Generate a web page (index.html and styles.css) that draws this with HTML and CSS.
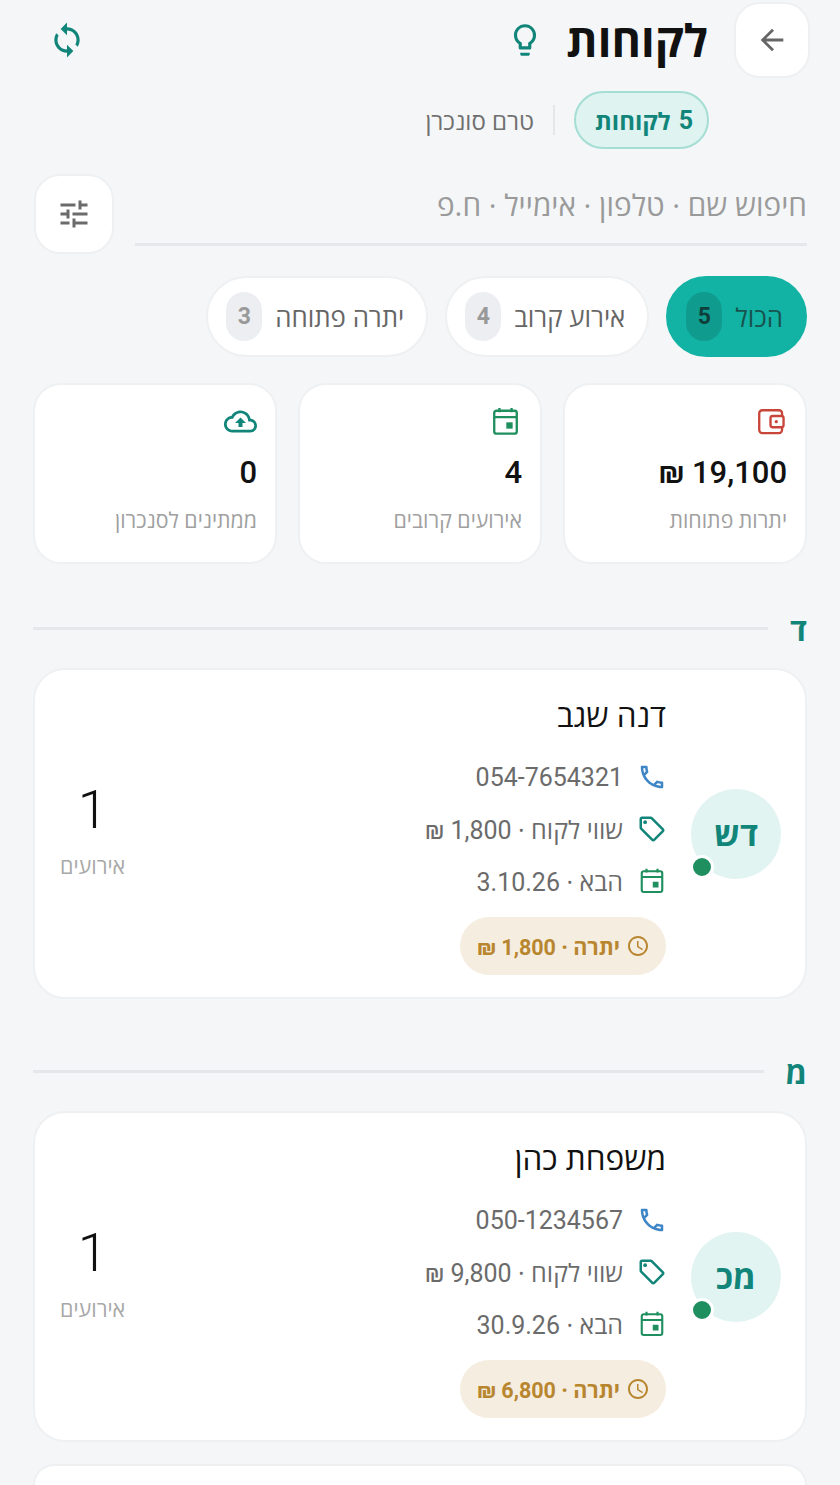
FILE: index.html
```html
<!DOCTYPE html>
<html lang="he" dir="rtl">

<head>
  <meta charset="UTF-8">
  <meta name="viewport" content="width=device-width, initial-scale=1.0">
  <title>לקוחות</title>
  <link rel="stylesheet" href="styles.css">
</head>

<body>
  <div class="page">
    <header class="topbar">
      <button class="icon-button back-button">
        <svg class="icon-back" viewBox="0 0 24 24"><path d="M20 11H7.83l5.59-5.59L12 4l-8 8 8 8 1.41-1.41L7.83 13H20v-2z"/></svg>
      </button>
      <h1 class="title">לקוחות</h1>
      <svg class="icon-bulb" viewBox="0 0 24 24"><path d="M9 21c0 .55.45 1 1 1h4c.55 0 1-.45 1-1v-1H9v1zm3-19C8.14 2 5 5.14 5 9c0 2.38 1.19 4.47 3 5.74V17c0 .55.45 1 1 1h6c.55 0 1-.45 1-1v-2.26c1.81-1.27 3-3.36 3-5.74 0-3.86-3.14-7-7-7zm2.85 11.1l-.85.6V16h-4v-2.3l-.85-.6C7.8 12.16 7 10.63 7 9c0-2.76 2.24-5 5-5s5 2.24 5 5c0 1.63-.8 3.16-2.15 4.1z"/></svg>
      <svg class="icon-sync" viewBox="0 0 24 24"><path d="M12 4V1L8 5l4 4V6c3.31 0 6 2.69 6 6 0 1.01-.25 1.97-.7 2.8l1.46 1.46C19.54 15.03 20 13.57 20 12c0-4.42-3.58-8-8-8zm0 14c-3.31 0-6-2.69-6-6 0-1.01.25-1.97.7-2.8L5.24 7.74C4.46 8.97 4 10.43 4 12c0 4.42 3.58 8 8 8v3l4-4-4-4v3z"/></svg>
    </header>

    <div class="summary">
      <span class="count-chip"><span class="chip-num num">5</span> לקוחות</span>
      <span class="summary-divider"></span>
      <span class="summary-note">טרם סונכרן</span>
    </div>

    <div class="search-row">
      <div class="search-field">חיפוש שם · טלפון · אימייל · ח.פ</div>
      <button class="icon-button filter-button">
        <svg class="icon-tune" viewBox="0 0 24 24"><path d="M3 17v2h6v-2H3zM3 5v2h10V5H3zm10 16v-2h8v-2h-8v-2h-2v6h2zM7 9v2H3v2h4v2h2V9H7zm14 4v-2H11v2h10zm-6-4h2V7h4V5h-4V3h-2v6z"/></svg>
      </button>
    </div>

    <div class="tabs">
      <div class="tab is-active"><span>הכול</span><span class="tab-count num">5</span></div>
      <div class="tab"><span>אירוע קרוב</span><span class="tab-count num">4</span></div>
      <div class="tab"><span>יתרה פתוחה</span><span class="tab-count num">3</span></div>
    </div>

    <div class="stats">
      <div class="stat">
        <svg class="stat-icon icon-red" viewBox="0 0 24 24"><rect x="3.8" y="3.8" width="16.6" height="16.6" rx="2.2" fill="none" stroke="currentColor" stroke-width="1.7"/><rect x="12" y="8" width="9.5" height="8.2" rx="1.6" fill="#fff" stroke="currentColor" stroke-width="1.7"/><circle cx="16.2" cy="12.1" r="1.2"/></svg>
        <div class="stat-value num">19,100 ₪</div>
        <div class="stat-label">יתרות פתוחות</div>
      </div>
      <div class="stat">
        <svg class="stat-icon icon-green" viewBox="0 0 24 24"><rect x="3.8" y="4.2" width="16.4" height="16.6" rx="1.6" fill="none" stroke="currentColor" stroke-width="1.7"/><path d="M3.8 8.8h16.4M7.6 2.2v3M16.4 2.2v3" fill="none" stroke="currentColor" stroke-width="1.7"/><rect x="12.6" y="12.6" width="4.6" height="4.6"/></svg>
        <div class="stat-value num">4</div>
        <div class="stat-label">אירועים קרובים</div>
      </div>
      <div class="stat">
        <svg class="stat-icon icon-teal" viewBox="0 0 24 24"><path d="M19.35 10.04C18.67 6.59 15.64 4 12 4 9.11 4 6.6 5.64 5.35 8.04 2.34 8.36 0 10.91 0 14c0 3.31 2.69 6 6 6h13c2.76 0 5-2.24 5-5 0-2.64-2.05-4.78-4.65-4.96zM19 18H6c-2.21 0-4-1.79-4-4 0-2.05 1.53-3.76 3.56-3.97l1.07-.11.5-.95C8.08 7.14 9.94 6 12 6c2.62 0 4.88 1.86 5.39 4.43l.3 1.5 1.53.11c1.56.1 2.78 1.41 2.78 2.96 0 1.65-1.35 3-3 3zM8 13h2.55v3h2.9v-3H16l-4-4z"/></svg>
        <div class="stat-value num">0</div>
        <div class="stat-label">ממתינים לסנכרון</div>
      </div>
    </div>

    <section class="group">
      <div class="group-head"><span class="group-letter">ד</span><span class="group-line"></span></div>
      <article class="card">
        <div class="avatar">דש<span class="avatar-dot"></span></div>
        <div class="card-body">
          <div class="card-name">דנה שגב</div>
          <div class="card-row">
            <svg class="row-icon icon-blue" viewBox="0 0 24 24"><path d="M6.54 5c.06.89.21 1.76.45 2.59l-1.2 1.2c-.41-1.2-.67-2.47-.76-3.79h1.51m9.86 12.02c.85.24 1.72.39 2.6.45v1.49c-1.32-.09-2.59-.35-3.8-.75l1.2-1.19M7.5 3H4c-.55 0-1 .45-1 1 0 9.39 7.61 17 17 17 .55 0 1-.45 1-1v-3.49c0-.55-.45-1-1-1-1.24 0-2.45-.2-3.57-.57-.1-.04-.21-.05-.31-.05-.26 0-.51.1-.71.29l-2.2 2.2c-2.83-1.45-5.15-3.76-6.59-6.59l2.2-2.2c.28-.28.36-.67.25-1.02C8.7 6.45 8.5 5.25 8.5 4c0-.55-.45-1-1-1z"/></svg>
            <span class="num">054-7654321</span>
          </div>
          <div class="card-row">
            <svg class="row-icon icon-teal" viewBox="0 0 24 24"><path d="M21.41 11.58l-9-9C12.05 2.22 11.55 2 11 2H4c-1.1 0-2 .9-2 2v7c0 .55.22 1.05.59 1.42l9 9c.36.36.86.58 1.41.58.55 0 1.05-.22 1.41-.59l7-7c.37-.36.59-.86.59-1.41 0-.55-.23-1.06-.59-1.42zM13 20.01L4 11V4h7v-.01l9 9-7 7.02z"/><circle cx="6.5" cy="6.5" r="1.5"/></svg>
            <span>שווי לקוח · <span class="num">1,800 ₪</span></span>
          </div>
          <div class="card-row">
            <svg class="row-icon icon-green" viewBox="0 0 24 24"><rect x="3.8" y="4.2" width="16.4" height="16.6" rx="1.6" fill="none" stroke="currentColor" stroke-width="1.7"/><path d="M3.8 8.8h16.4M7.6 2.2v3M16.4 2.2v3" fill="none" stroke="currentColor" stroke-width="1.7"/><rect x="12.6" y="12.6" width="4.6" height="4.6"/></svg>
            <span>הבא · <span class="num">3.10.26</span></span>
          </div>
          <div class="balance">
            <svg class="balance-icon" viewBox="0 0 24 24"><path d="M11.99 2C6.47 2 2 6.48 2 12s4.47 10 9.99 10C17.52 22 22 17.52 22 12S17.52 2 11.99 2zM12 20c-4.42 0-8-3.58-8-8s3.58-8 8-8 8 3.58 8 8-3.58 8-8 8zm.5-13H11v6l5.25 3.15.75-1.23-4.5-2.67z"/></svg>
            <span>יתרה · <span class="num">1,800 ₪</span></span>
          </div>
        </div>
        <div class="card-side">
          <div class="side-count num">1</div>
          <div class="side-label">אירועים</div>
        </div>
      </article>
    </section>

    <section class="group">
      <div class="group-head"><span class="group-letter">מ</span><span class="group-line"></span></div>
      <article class="card">
        <div class="avatar">מכ<span class="avatar-dot"></span></div>
        <div class="card-body">
          <div class="card-name">משפחת כהן</div>
          <div class="card-row">
            <svg class="row-icon icon-blue" viewBox="0 0 24 24"><path d="M6.54 5c.06.89.21 1.76.45 2.59l-1.2 1.2c-.41-1.2-.67-2.47-.76-3.79h1.51m9.86 12.02c.85.24 1.72.39 2.6.45v1.49c-1.32-.09-2.59-.35-3.8-.75l1.2-1.19M7.5 3H4c-.55 0-1 .45-1 1 0 9.39 7.61 17 17 17 .55 0 1-.45 1-1v-3.49c0-.55-.45-1-1-1-1.24 0-2.45-.2-3.57-.57-.1-.04-.21-.05-.31-.05-.26 0-.51.1-.71.29l-2.2 2.2c-2.83-1.45-5.15-3.76-6.59-6.59l2.2-2.2c.28-.28.36-.67.25-1.02C8.7 6.45 8.5 5.25 8.5 4c0-.55-.45-1-1-1z"/></svg>
            <span class="num">050-1234567</span>
          </div>
          <div class="card-row">
            <svg class="row-icon icon-teal" viewBox="0 0 24 24"><path d="M21.41 11.58l-9-9C12.05 2.22 11.55 2 11 2H4c-1.1 0-2 .9-2 2v7c0 .55.22 1.05.59 1.42l9 9c.36.36.86.58 1.41.58.55 0 1.05-.22 1.41-.59l7-7c.37-.36.59-.86.59-1.41 0-.55-.23-1.06-.59-1.42zM13 20.01L4 11V4h7v-.01l9 9-7 7.02z"/><circle cx="6.5" cy="6.5" r="1.5"/></svg>
            <span>שווי לקוח · <span class="num">9,800 ₪</span></span>
          </div>
          <div class="card-row">
            <svg class="row-icon icon-green" viewBox="0 0 24 24"><rect x="3.8" y="4.2" width="16.4" height="16.6" rx="1.6" fill="none" stroke="currentColor" stroke-width="1.7"/><path d="M3.8 8.8h16.4M7.6 2.2v3M16.4 2.2v3" fill="none" stroke="currentColor" stroke-width="1.7"/><rect x="12.6" y="12.6" width="4.6" height="4.6"/></svg>
            <span>הבא · <span class="num">30.9.26</span></span>
          </div>
          <div class="balance">
            <svg class="balance-icon" viewBox="0 0 24 24"><path d="M11.99 2C6.47 2 2 6.48 2 12s4.47 10 9.99 10C17.52 22 22 17.52 22 12S17.52 2 11.99 2zM12 20c-4.42 0-8-3.58-8-8s3.58-8 8-8 8 3.58 8 8-3.58 8-8 8zm.5-13H11v6l5.25 3.15.75-1.23-4.5-2.67z"/></svg>
            <span>יתרה · <span class="num">6,800 ₪</span></span>
          </div>
        </div>
        <div class="card-side">
          <div class="side-count num">1</div>
          <div class="side-label">אירועים</div>
        </div>
      </article>
    </section>

    <div class="card-next"></div>
  </div>
</body>

</html>
```

FILE: styles.css
```css
* {
  margin: 0;
  padding: 0;
  box-sizing: border-box;
}

html,
body {
  height: 100%;
  overflow: hidden;
}

body {
  background: #F4F6F8;
  color: #111;
  font-family: "Open Sans", Roboto, sans-serif;
}

.num {
  font-family: Roboto, sans-serif;
}

.page {
  display: flex;
  flex-direction: column;
  padding: 2px 33px 0;
}

svg {
  display: block;
  flex-shrink: 0;
  fill: currentColor;
}

.icon-red { color: #C8453A; }
.icon-green { color: #1F8F5F; }
.icon-teal { color: #12857A; }
.icon-blue { color: #3E86C6; }

.icon-button {
  display: flex;
  align-items: center;
  justify-content: center;
  background: #fff;
  border: 2px solid #EEF0F2;
  border-radius: 26px;
}

/* top bar */
.topbar {
  display: flex;
  align-items: center;
  height: 76px;
  margin-right: -3px;
}

.back-button {
  width: 76px;
  height: 76px;
  color: #666;
}

.icon-back {
  width: 34px;
  height: 34px;
}

.title {
  margin-right: 26px;
  font-size: 45px;
  font-weight: 700;
  line-height: 76px;
}

.icon-bulb {
  width: 38px;
  height: 38px;
  margin-right: 22px;
  color: #12857A;
}

.icon-sync {
  width: 38px;
  height: 38px;
  margin-right: auto;
  margin-left: 15px;
  color: #12857A;
}

/* count line */
.summary {
  display: flex;
  align-items: center;
  margin-top: 13px;
  margin-right: 98px;
}

.count-chip {
  display: flex;
  align-items: center;
  gap: 8px;
  height: 58px;
  padding: 0 14px 0 19px;
  border: 2px solid #A5DED5;
  border-radius: 29px;
  background: #DFF3F0;
  color: #12857A;
  font-size: 24px;
  font-weight: 700;
}

.chip-num {
  font-size: 25px;
}

.summary-divider {
  width: 2px;
  height: 30px;
  margin: 0 19px;
  background: #E4E6E8;
}

.summary-note {
  color: #6F6F6F;
  font-size: 24px;
}

/* search */
.search-row {
  display: flex;
  align-items: flex-start;
  gap: 21px;
  margin-top: 25px;
  padding-left: 1px;
}

.search-field {
  flex: 1;
  height: 72px;
  border-bottom: 3px solid #E5E7EA;
  color: #9A9A9A;
  font-size: 29.7px;
  line-height: 62px;
}

.filter-button {
  width: 80px;
  height: 80px;
  color: #6B6B6B;
}

.icon-tune {
  width: 36px;
  height: 36px;
}

/* tabs */
.tabs {
  display: flex;
  gap: 17px;
  margin-top: 22px;
}

.tab {
  display: flex;
  align-items: center;
  gap: 13px;
  height: 81px;
  padding: 0 22px 0 18px;
  border: 2px solid #EEF0F2;
  border-radius: 41px;
  background: #fff;
  color: #666;
  font-size: 25.8px;
}

.tab-count {
  display: flex;
  align-items: center;
  justify-content: center;
  width: 36px;
  height: 49px;
  border-radius: 18px;
  background: #ECEEF1;
  color: #999;
  font-size: 23px;
  font-weight: 700;
}

.tab.is-active {
  border-color: #12B3A4;
  background: #12B3A4;
  color: #17544F;
}

.tab.is-active .tab-count {
  background: #0F9C8F;
  color: #0F3F3B;
}

/* stat tiles */
.stats {
  display: grid;
  grid-template-columns: repeat(3, 1fr);
  gap: 21px;
  margin-top: 26px;
}

.stat {
  display: flex;
  flex-direction: column;
  height: 181px;
  padding: 20px 18px 0;
  border: 2px solid #EEF0F2;
  border-radius: 28px;
  background: #fff;
}

.stat-icon {
  width: 33px;
  height: 33px;
}

.stat-value {
  margin-top: 13px;
  font-size: 31px;
  font-weight: 500;
  line-height: 44px;
}

.stat-label {
  margin-top: 10px;
  color: #A0A0A0;
  font-size: 21.3px;
  line-height: 30px;
}

/* groups */
.group {
  margin-top: 51px;
}

.group + .group {
  margin-top: 59px;
}

.group-head {
  display: flex;
  align-items: center;
  gap: 22px;
  height: 30px;
}

.group-letter {
  padding-bottom: 2px;
  color: #12857A;
  font-size: 31px;
  font-weight: 700;
  line-height: 30px;
}

.group-line {
  flex: 1;
  height: 3px;
  margin-bottom: 4px;
  background: #E5E7EA;
}

.card {
  display: flex;
  align-items: center;
  height: 331px;
  margin-top: 23px;
  padding: 0 24px 0 25px;
  border: 2px solid #EEF0F2;
  border-radius: 32px;
  background: #fff;
}

.card-next {
  height: 21px;
  margin-top: 22px;
  border: 2px solid #EEF0F2;
  border-bottom: 0;
  border-radius: 32px 32px 0 0;
  background: #fff;
}

.avatar {
  position: relative;
  display: flex;
  align-items: center;
  justify-content: center;
  width: 90px;
  height: 90px;
  border-radius: 50%;
  background: #E1F4F1;
  color: #12857A;
  font-size: 33px;
  font-weight: 700;
}

.avatar-dot {
  position: absolute;
  right: 67px;
  bottom: 0;
  width: 24px;
  height: 24px;
  border: 3px solid #fff;
  border-radius: 50%;
  background: #1F8F5F;
}

.card-body {
  display: flex;
  flex-direction: column;
  align-items: flex-start;
  margin-right: 25px;
}

.card-name {
  margin-bottom: 13px;
  font-size: 31.5px;
  line-height: 46px;
}

.card-row {
  display: flex;
  align-items: center;
  height: 52px;
  color: #6B6B6B;
  font-size: 25px;
}

.row-icon {
  width: 30px;
  height: 30px;
  margin: 0 -1px 0 14px;
}

.balance {
  display: flex;
  align-items: center;
  gap: 6px;
  height: 58px;
  margin-top: 10px;
  padding: 0 16px 0 17px;
  border-radius: 29px;
  background: #F5EDE0;
  color: #B8862F;
  font-size: 21.5px;
  font-weight: 700;
}

.balance-icon {
  width: 24px;
  height: 24px;
}

.card-side {
  display: flex;
  flex-direction: column;
  align-items: center;
  margin-right: auto;
  margin-bottom: 9px;
}

.side-count {
  font-size: 54px;
  font-weight: 300;
  line-height: 64px;
}

.side-label {
  margin-top: 9px;
  color: #A8A8A8;
  font-size: 21.5px;
  line-height: 30px;
}
```
